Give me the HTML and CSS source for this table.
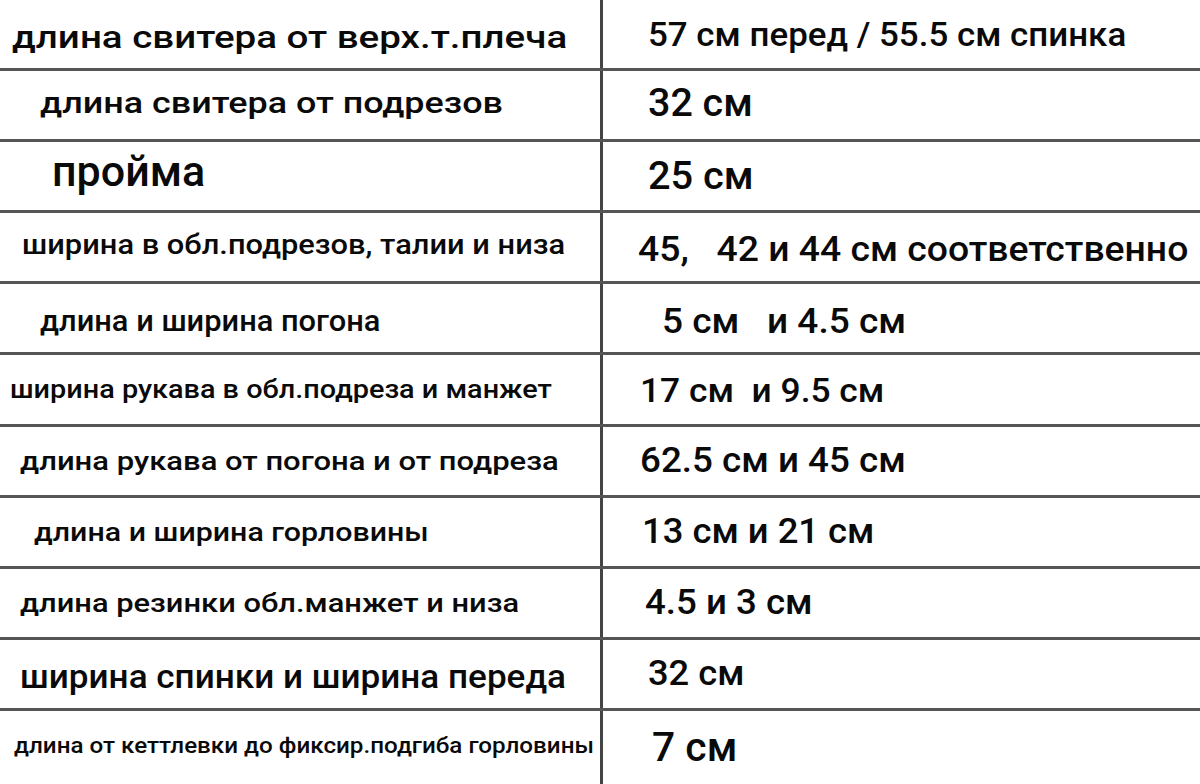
FILE: index.html
```html
<!DOCTYPE html>
<html lang="ru">
<head>
<meta charset="utf-8">
<title>Мерки свитера</title>
<link rel="stylesheet" href="styles.css">
</head>
<body>
<div class="table">
  <div class="row">
    <div class="cell left l1"><span class="t">длина свитера от верх.т.плеча</span></div>
    <div class="cell right r1"><span class="t">57 см перед / 55.5 см спинка</span></div>
  </div>
  <div class="row">
    <div class="cell left l2"><span class="t">длина свитера от подрезов</span></div>
    <div class="cell right r2"><span class="t">32 см</span></div>
  </div>
  <div class="row">
    <div class="cell left l3"><span class="t">пройма</span></div>
    <div class="cell right r3"><span class="t">25 см</span></div>
  </div>
  <div class="row">
    <div class="cell left l4"><span class="t">ширина в обл.подрезов, талии и низа</span></div>
    <div class="cell right r4"><span class="t">45,   42 и 44 см соответственно</span></div>
  </div>
  <div class="row">
    <div class="cell left l5"><span class="t">длина и ширина погона</span></div>
    <div class="cell right r5"><span class="t">5 см   и 4.5 см</span></div>
  </div>
  <div class="row">
    <div class="cell left l6"><span class="t">ширина рукава в обл.подреза и манжет</span></div>
    <div class="cell right r6"><span class="t">17 см  и 9.5 см</span></div>
  </div>
  <div class="row">
    <div class="cell left l7"><span class="t">длина рукава от погона и от подреза</span></div>
    <div class="cell right r7"><span class="t">62.5 см и 45 см</span></div>
  </div>
  <div class="row">
    <div class="cell left l8"><span class="t">длина и ширина горловины</span></div>
    <div class="cell right r8"><span class="t">13 см и 21 см</span></div>
  </div>
  <div class="row">
    <div class="cell left l9"><span class="t">длина резинки обл.манжет и низа</span></div>
    <div class="cell right r9"><span class="t">4.5 и 3 см</span></div>
  </div>
  <div class="row">
    <div class="cell left l10"><span class="t">ширина спинки и ширина переда</span></div>
    <div class="cell right r10"><span class="t">32 см</span></div>
  </div>
  <div class="row">
    <div class="cell left l11"><span class="t">длина от кеттлевки до фиксир.подгиба горловины</span></div>
    <div class="cell right r11"><span class="t">7 см</span></div>
  </div>
</div>
</body>
</html>
```
FILE: styles.css
```css
html, body {
  margin: 0;
  padding: 0;
  background: #ffffff;
  overflow: hidden;
}

.table {
  width: 1200px;
  height: 784px;
  font-family: Roboto, "Noto Sans", sans-serif;
  font-weight: 500;
  color: #0a0a0a;
}

.row {
  display: grid;
  grid-template-columns: 600px 1fr;
  height: 71.1px;
  box-sizing: border-box;
  border-bottom: 3px solid #555555;
}

.row:last-child {
  height: 77px;
}

.cell {
  display: flex;
  align-items: center;
  box-sizing: border-box;
  white-space: pre;
}

.right {
  border-left: 3px solid #444444;
}

.t {
  display: inline-block;
  transform-origin: left center;
}

/* left column */
.l1 { font-size: 32px; padding-left: 12px; padding-top: 5px; }
.l1 .t { transform: scaleX(1.204); }
.l2 { font-size: 30px; padding-left: 40px; padding-bottom: 5px; }
.l2 .t { transform: scaleX(1.197); }
.l3 { font-size: 43px; padding-left: 52px; padding-bottom: 11px; }
.l4 { font-size: 27px; padding-left: 22px; padding-bottom: 4px; }
.l4 .t { transform: scaleX(1.142); }
.l5 { font-size: 30px; padding-left: 40px; padding-top: 4px; }
.l5 .t { transform: scaleX(1.027); }
.l6 { font-size: 25px; padding-left: 10px; }
.l6 .t { transform: scaleX(1.153); }
.l7 { font-size: 26.5px; padding-left: 20px; }
.l7 .t { transform: scaleX(1.17); }
.l8 { font-size: 26.5px; padding-left: 34px; }
.l8 .t { transform: scaleX(1.145); }
.l9 { font-size: 26.5px; padding-left: 20px; }
.l9 .t { transform: scaleX(1.164); }
.l10 { font-size: 33.5px; padding-left: 20px; padding-top: 5px; }
.l10 .t { transform: scaleX(1.048); }
.l11 { font-size: 22px; padding-left: 14px; padding-bottom: 4px; }
.l11 .t { transform: scaleX(1.10); }

/* right column */
.r1 { font-size: 33px; padding-left: 45px; }
.r1 .t { transform: scaleX(1.058); }
.r2 { font-size: 39px; padding-left: 45px; padding-bottom: 5px; }
.r2 .t { transform: scaleX(1.01); }
.r3 { font-size: 39px; padding-left: 45px; }
.r3 .t { transform: scaleX(1.02); }
.r4 { font-size: 35px; padding-left: 35px; padding-top: 4px; }
.r4 .t { transform: scaleX(1.066); }
.r5 { font-size: 35px; padding-left: 59px; padding-top: 6px; }
.r5 .t { transform: scaleX(1.058); }
.r6 { font-size: 34px; padding-left: 37px; }
.r6 .t { transform: scaleX(1.04); }
.r7 { font-size: 35px; padding-left: 37px; }
.r7 .t { transform: scaleX(1.05); }
.r8 { font-size: 35px; padding-left: 39px; }
.r8 .t { transform: scaleX(1.04); }
.r9 { font-size: 35px; padding-left: 42px; }
.r9 .t { transform: scaleX(1.047); }
.r10 { font-size: 35px; padding-left: 45px; }
.r10 .t { transform: scaleX(1.036); }
.r11 { font-size: 40px; padding-left: 49px; }
.r11 .t { transform: scaleX(1.02); }
```
